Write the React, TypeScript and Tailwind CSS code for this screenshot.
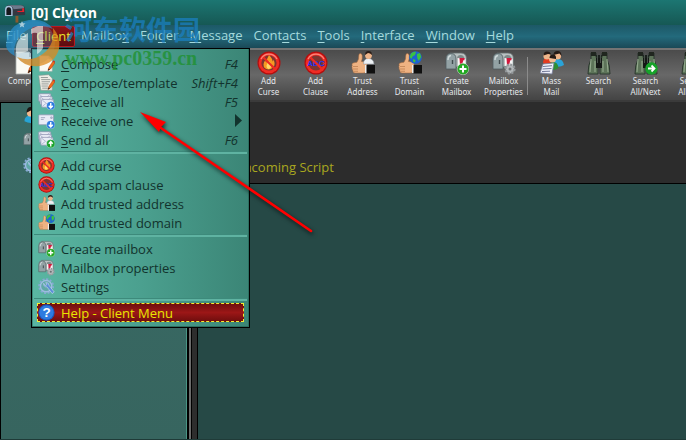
import React from 'react';

type IconName =
  | 'compose'
  | 'template'
  | 'receiveAll'
  | 'receiveOne'
  | 'sendAll'
  | 'curse'
  | 'clause'
  | 'trustAddress'
  | 'trustDomain'
  | 'createMailbox'
  | 'mailboxProps'
  | 'settings'
  | 'help'
  | 'massMail'
  | 'search'
  | 'searchNext'
  | 'person'
  | 'mailbox';

interface MenuEntry {
  icon: IconName;
  label: string;
  hot?: boolean;
  keys?: string;
  sub?: boolean;
  active?: boolean;
}

interface ToolEntry {
  icon: IconName;
  lines: string[];
}

const clientMenu: MenuEntry[][] = [
  [
    { icon: 'compose', label: 'Compose', hot: true, keys: 'F4' },
    { icon: 'template', label: 'Compose/template', hot: true, keys: 'Shift+F4' },
    { icon: 'receiveAll', label: 'Receive all', hot: true, keys: 'F5' },
    { icon: 'receiveOne', label: 'Receive one', sub: true },
    { icon: 'sendAll', label: 'Send all', hot: true, keys: 'F6' },
  ],
  [
    { icon: 'curse', label: 'Add curse' },
    { icon: 'clause', label: 'Add spam clause' },
    { icon: 'trustAddress', label: 'Add trusted address' },
    { icon: 'trustDomain', label: 'Add trusted domain' },
  ],
  [
    { icon: 'createMailbox', label: 'Create mailbox' },
    { icon: 'mailboxProps', label: 'Mailbox properties' },
    { icon: 'settings', label: 'Settings' },
  ],
  [{ icon: 'help', label: 'Help - Client Menu', active: true }],
];

// [before, underlined letter, after]
const menusAfterClient: [string, string, string][] = [
  ['Mailbo', 'x', ''],
  ['Fol', 'd', 'er'],
  ['', 'M', 'essage'],
  ['Cont', 'a', 'cts'],
  ['', 'T', 'ools'],
  ['', 'I', 'nterface'],
  ['', 'W', 'indow'],
  ['', 'H', 'elp'],
];

const rulesTools: ToolEntry[] = [
  { icon: 'curse', lines: ['Add', 'Curse'] },
  { icon: 'clause', lines: ['Add', 'Clause'] },
  { icon: 'trustAddress', lines: ['Trust', 'Address'] },
  { icon: 'trustDomain', lines: ['Trust', 'Domain'] },
  { icon: 'createMailbox', lines: ['Create', 'Mailbox'] },
  { icon: 'mailboxProps', lines: ['Mailbox', 'Properties'] },
];

const searchTools: ToolEntry[] = [
  { icon: 'massMail', lines: ['Mass', 'Mail'] },
  { icon: 'search', lines: ['Search', 'All'] },
  { icon: 'searchNext', lines: ['Search', 'All/Next'] },
  { icon: 'searchNext', lines: ['Search', 'All/Prev'] },
];

const Pencil = () => (
  <g>
    <path d="M14 22l1.500-5 5.500-8 3 2-5.500 8z" fill="#f06a1c" stroke="#a33a0c" strokeWidth=".6" />
    <path d="M21 9l1-1.500 2 1.600-.3 1.600z" fill="#d22" />
    <path d="M14 22l1-3 2 1.400z" fill="#2b2018" />
  </g>
);

const Envelope = ({ x, y }: { x: number; y: number }) => (
  <g transform={`translate(${x} ${y})`}>
    <rect width="17" height="11" rx="1" fill="#e9ecf6" stroke="#8b90ae" />
    <path d="M1 1l7.500 6L16 1M1 10l5-4M16 10l-5-4" fill="none" stroke="#9fa5c4" />
  </g>
);

const Badge = ({ color, d }: { color: string; d: string }) => (
  <g>
    <circle cx="18" cy="18" r="5.800" fill={color} stroke="#ffffff" strokeOpacity=".5" strokeWidth=".8" />
    <path d={d} fill="none" stroke="#fff" strokeWidth="2" />
  </g>
);

const Ban = ({ children }: { children: React.ReactNode }) => (
  <g>
    <circle cx="12" cy="12" r="11.500" fill="#b30f0f" />
    <circle cx="12" cy="12" r="10.300" fill="#f02c24" />
    <circle cx="12" cy="12" r="7.600" fill="#7c3530" />
    {children}
    <path d="M6 6l12 12" stroke="#ee2a22" strokeWidth="2.200" />
    <path d="M4 8a9 9 0 0 1 16 0" fill="none" stroke="#ff9d94" strokeWidth="1.200" opacity=".8" />
  </g>
);

const Thumb = () => (
  <g>
    <path
      d="M1 13.500q0-1.500 2-1.700l3-.6q2.200-3 1.800-6.700 0-2 1.500-2t1.900 2.200q.3 2.800-.8 5.800l5.600.8v9.200q-1 1.500-4 1.500H4q-2 0-2-2 0-1-1-2 .6-1-.2-2.200.8-1 .2-2.300z"
      fill="#eeb282"
      stroke="#a86a3d"
      strokeWidth=".5"
    />
    <path d="M2 15.500h5M2 18h5M3 20.300h4" stroke="#b87a4c" strokeWidth=".7" />
    <rect x="14" y="14" width="2" height="8" fill="#eee" />
    <path d="M15.500 14H24v8.500h-8.500z" fill="#101010" />
  </g>
);

const Globe = () => (
  <g>
    <circle cx="17.500" cy="6.500" r="6.300" fill="#1d62d2" />
    <path d="M13 2.500q3-2.500 5-1.500l-1 3-2.500 1.500-1 2.500-1.800-2zM19 3l3-1 1.200 4-2.500 4-1.500-3zM15 8l2.500 1-.5 2.600-2-1z" fill="#3cc142" />
  </g>
);

const Bust = () => (
  <g>
    <path d="M12.500 13q0-5.500 5-5.500t5.500 5.500z" fill="#eef1f4" stroke="#8b939c" strokeWidth=".5" />
    <circle cx="17.500" cy="4.600" r="3.400" fill="#efb58a" />
    <path d="M14 4q0-4 3.500-4t3.500 4q-2-2-4-2z" fill="#2a1d17" />
  </g>
);

const PostBox = () => (
  <g>
    <path d="M5 2h11q5 0 5.500 5v9H5z" fill="#b9c2c2" stroke="#626c6c" strokeWidth=".8" />
    <path d="M12 17V7.500q0-3.500 3.500-3.500T19.500 8v9z" fill="#7f8989" />
    <path d="M12.500 7l8 1v6l-8 1z" fill="#f6f6f6" />
    <path d="M14.500 7h5v2.200h-1.200l-1.300 5h-2z" fill="#d3183c" />
    <path d="M1 18V8q0-5.500 5-5.500t5 5.500v10z" fill="#93a2a5" stroke="#4f5c60" strokeWidth=".8" />
    <path d="M3 9q0-4 3-4.500" fill="none" stroke="#d0dadb" strokeWidth="1.400" />
    <path d="M7.500 9v4" stroke="#414c50" strokeWidth="1.400" />
  </g>
);

const Binoculars = () => (
  <g>
    <rect x="8" y="4" width="8" height="9" fill="#1b201d" />
    <path d="M4 2h5v4l2 4v13H1q0-9 3-15z" fill="#5d7459" stroke="#27332a" strokeWidth=".9" />
    <path d="M20 2h-5v4l-2 4v13h10q0-9-3-15z" fill="#5d7459" stroke="#27332a" strokeWidth=".9" />
    <path d="M9 7h6v10H9z" fill="#151816" />
    <path d="M4 1h5v4H4zM15 1h5v4h-5z" fill="#20261f" />
    <path d="M4 8L3 21M20 8l1 13M8 10v11M16 10v11" stroke="#93a98d" strokeWidth="1.100" />
    <path d="M10.500 4v8M13.500 4v8" stroke="#555f58" strokeWidth=".8" />
  </g>
);

const Icon = ({ name, className }: { name: IconName; className: string }) => (
  <svg viewBox="0 0 24 24" className={className} aria-hidden="true">
    {name === 'compose' && (
      <>
        <path d="M2 1h13l5 5v17H2z" fill="#fbfaf4" stroke="#aab0ae" strokeWidth=".8" />
        <path d="M15 1v5h5z" fill="#c9ccca" />
        <Pencil />
      </>
    )}
    {name === 'template' && (
      <>
        <path d="M1 2l14-1 5 5v17H4z" fill="#f0eee6" stroke="#8e9391" strokeWidth=".8" />
        <path d="M4 5h10M4.500 8h13M5 11h12M5 14h10M5 17h9M6 20h8" stroke="#7d8483" strokeWidth="1.100" />
        <Pencil />
      </>
    )}
    {name === 'receiveAll' && (
      <>
        <Envelope x={1} y={1} />
        <Envelope x={3} y={5} />
        <Envelope x={5} y={9} />
        <Badge color="#2d7be0" d="M18 14.200v6.600M15.200 18l2.800 3 2.800-3" />
      </>
    )}
    {name === 'receiveOne' && (
      <>
        <rect x="1" y="4" width="21" height="14" rx="1" fill="#e9ecf6" stroke="#8b90ae" />
        <path d="M4 8h6M4 10.500h4M18 7h2v2h-2z" fill="none" stroke="#8b90ae" />
        <Badge color="#2d7be0" d="M18 14.200v6.600M15.200 18l2.800 3 2.800-3" />
      </>
    )}
    {name === 'sendAll' && (
      <>
        <Envelope x={1} y={1} />
        <Envelope x={2} y={5} />
        <Envelope x={4} y={9} />
        <Badge color="#18a32a" d="M18 21.800v-6.600M15.200 18l2.800-3 2.800 3" />
      </>
    )}
    {name === 'curse' && (
      <Ban>
        <path d="M12 4q4 4 3.500 6.500 1-.5 1-2 2.500 5.500-.5 8-2 2-4.500 2-5-.5-5-5 0-2.500 2-4.500 0 2 1 2.500Q9.500 8 12 4z" fill="#f79a22" />
        <path d="M12 10q3 3 2 6-1 2-2.500 2-2-.500-2-3 .2-2 2.500-5z" fill="#ffd968" />
      </Ban>
    )}
    {name === 'clause' && (
      <Ban>
        <text x="12" y="15" textAnchor="middle" fontSize="8" fontWeight="700" fontFamily="Liberation Sans, sans-serif" fill="#2433f0">
          ABC
        </text>
      </Ban>
    )}
    {name === 'trustAddress' && (
      <>
        <Thumb />
        <Bust />
      </>
    )}
    {name === 'trustDomain' && (
      <>
        <Thumb />
        <Globe />
      </>
    )}
    {name === 'createMailbox' && (
      <>
        <PostBox />
        <Badge color="#23a823" d="M18 14.500v7M14.500 18h7" />
      </>
    )}
    {name === 'mailboxProps' && (
      <>
        <PostBox />
        <circle cx="18" cy="18" r="4.400" fill="#b4b8ba" stroke="#94999c" strokeWidth="2.400" strokeDasharray="2 1.400" />
        <circle cx="18" cy="18" r="1.500" fill="#6c7073" />
      </>
    )}
    {name === 'settings' && (
      <>
        <circle cx="11.500" cy="11.500" r="10" fill="none" stroke="#86a9d4" strokeWidth="2.400" strokeDasharray="3 2.200" />
        <circle cx="11.500" cy="11.500" r="8" fill="#5fa8a6" stroke="#9dbce0" strokeWidth="2" />
        <path d="M8 7.500a4 4 0 0 0 4.500 5L20 22l3-2.200-7.500-9.500A4 4 0 0 0 11 6.500l1.500 2.800-2 1.500z" fill="#5d8fd8" stroke="#d3e1f5" strokeWidth=".8" />
      </>
    )}
    {name === 'help' && (
      <>
        <circle cx="12" cy="12" r="11.500" fill="#1b57b8" />
        <circle cx="12" cy="12" r="10" fill="#2e7be0" />
        <text x="12" y="18.500" textAnchor="middle" fontSize="19" fontWeight="700" fontFamily="Liberation Sans, sans-serif" fill="#fff">
          ?
        </text>
      </>
    )}
    {name === 'massMail' && (
      <>
        <path d="M13 15q0-7 5-7t6 6q-4 3-11 1z" fill="#2aa3d8" />
        <circle cx="17.500" cy="5" r="3.600" fill="#efb58a" />
        <path d="M13.500 4q0-4 4-4t4 5l-2-2.500z" fill="#251a16" />
        <path d="M9 19q-1-8 4-8t5.500 6q-4 3-9.500 2z" fill="#2b8f34" />
        <path d="M3 12q0-5 4-5t4 4l-3 4z" fill="#e33b20" />
        <circle cx="7" cy="5" r="3.600" fill="#efb58a" />
        <circle cx="12.500" cy="8" r="3.500" fill="#f2bd94" />
        <path d="M3.500 4.500q0-4 3.500-4t4 3l-3-.5zM9.500 7q0-3.500 3.500-3.500T16 8z" fill="#251a16" />
        <path d="M3 13l11-1-2 11-12-1z" fill="#eff1fa" stroke="#767d9c" strokeWidth=".8" />
        <path d="M3 15.500l9-.8M2.500 18l9-.5M2 20.500l8-.3" stroke="#6e7696" />
      </>
    )}
    {name === 'search' && <Binoculars />}
    {name === 'searchNext' && (
      <>
        <Binoculars />
        <circle cx="17.500" cy="17.500" r="6.200" fill="#16a329" />
        <path d="M14 17.500h6.500M17.500 14.500l3 3-3 3" fill="none" stroke="#fff" strokeWidth="1.800" />
      </>
    )}
    {name === 'person' && (
      <>
        <path d="M2 20q0-8 9-8t9 8q-9 5-18 0z" fill="#27a3d4" />
        <circle cx="11" cy="8" r="5.500" fill="#f0b78c" />
        <path d="M5 8q0-8 6-8t6 8l-4-4z" fill="#1c1613" />
      </>
    )}
    {name === 'mailbox' && <PostBox />}
  </svg>
);

const ToolButton = ({ tool }: { tool: ToolEntry }) => (
  <button className="flex w-[47px] shrink-0 flex-col items-center font-['Noto_Sans',sans-serif] text-[8px] leading-[11px] text-gray-200">
    <Icon name={tool.icon} className="h-6 w-6" />
    {tool.lines.map((line) => (
      <span key={line}>{line}</span>
    ))}
  </button>
);

const ClientMenu = () => (
  <div
    role="menu"
    className="absolute top-full -left-px z-10 w-[219px] border border-black bg-linear-to-r from-[#5ab6a2] via-[#4ba08f] to-[#3b8576] p-[5px] text-[#12332d] shadow-[inset_-1px_-1px_0_#2c6e60,inset_1px_1px_0_#3c8a7a]"
  >
    {clientMenu.map((group, i) => (
      <div key={i}>
        {i > 0 && <div className="-mx-[3px] my-[2px] h-[3px] border-t border-b-2 border-t-[#3d8a7b] border-b-[#5fb3a2]" />}
        {group.map((item) => (
          <button
            key={item.label}
            role="menuitem"
            className={`flex h-[19px] w-full items-center gap-1.5 pr-1.5 text-left ${
              item.active
                ? 'bg-linear-to-b from-[#6c0d0d] via-[#9c1717] to-[#6c0d0d] text-[#e8e600] outline-1 -outline-offset-1 outline-dashed outline-[#f4ee30]'
                : ''
            }`}
          >
            <Icon name={item.icon} className="ml-px h-[17px] w-[17px] shrink-0" />
            <span className="flex-1 pt-0.5 whitespace-nowrap">
              {item.hot ? (
                <>
                  <u className="underline-offset-2">{item.label[0]}</u>
                  {item.label.slice(1)}
                </>
              ) : (
                item.label
              )}
            </span>
            {item.keys && <span className="pt-0.5 italic">{item.keys}</span>}
            {item.sub && (
              <svg viewBox="0 0 7 13" className="-mr-1 h-[13px] w-[7px]" aria-hidden="true">
                <path d="M0 0l7 6.500L0 13z" fill="#12332d" />
              </svg>
            )}
          </button>
        ))}
      </div>
    ))}
  </div>
);

const Watermark = () => (
  <div className="pointer-events-none absolute top-4 left-[5px] z-20 flex gap-1" aria-hidden="true">
    <svg viewBox="0 0 56 52" className="h-[52px] w-14" aria-hidden="true">
      <circle cx="28" cy="27" r="22" fill="#5f9fc4" opacity=".3" />
      <path d="M1 30Q2 8 24 4q16-2 24 9-13-6-24 0Q10 20 9 35q0 3 1 5-8-4-9-10z" fill="#2a8dc8" opacity=".75" />
      <path d="M48 12q8 9 6 21-4 14-19 17-15 2-23-9 15 6 27-4 11-9 9-25z" fill="#de8a1e" opacity=".75" />
      <path d="M11 31q1-7 6-10l6-4v18q-6 3-12 2zM26 13l7-3h5v22q-3 5-6 6V17q-3-1-6 1z" fill="#f4f6f2" opacity=".6" />
      <path d="M17 5l1 2.300 2.500.2-2 1.600.7 2.400-2.200-1.300-2.200 1.300.7-2.400-2-1.600 2.500-.2z" fill="#dfe9ea" opacity=".7" />
    </svg>
    <div className="flex flex-col">
      <span className="font-['Noto_Sans_CJK_SC',sans-serif] text-[27px] leading-[26px] font-bold whitespace-nowrap text-[#1a7fc0]/75">
        河东软件园
      </span>
      <span className="mt-1.5 font-['Liberation_Serif',serif] text-[20px] leading-5 font-bold text-[#1f9130]/80">
        www.pc0359.cn
      </span>
    </div>
  </div>
);

const Arrow = () => (
  <svg
    viewBox="0 0 190 136"
    className="pointer-events-none absolute top-[106px] left-[134px] z-30 h-[136px] w-[190px] drop-shadow-[1px_2px_2px_rgba(0,0,0,0.7)]"
    aria-hidden="true"
  >
    <path d="M24 20L177 125" stroke="#ff0000" strokeWidth="2.600" strokeLinecap="round" />
    <path d="M6 6l26 10-5 5-2 5z" fill="#ff0000" />
  </svg>
);

export default function App() {
  return (
    <div className="relative flex min-h-screen flex-col overflow-hidden bg-black font-['Open_Sans',sans-serif] text-[13px] leading-[19px]">
      <header className="flex h-[25px] items-center gap-1 bg-linear-to-b from-[#1c7672] to-[#165854] pl-1 text-white">
        <svg viewBox="0 0 24 20" className="h-5 w-[23px]" aria-hidden="true">
          <path d="M4 2h14q4 0 4 5v5L2 13V7q0-4 2-5z" fill="#343842" />
          <path d="M5 2h12q4 0 4 3L10 6q-1-3-5-4z" fill="#6d7a8c" />
          <path d="M1 13V7q0-4.500 4-4.500T9 7v6z" fill="#a9c3dc" />
          <path d="M2.500 12V7.500Q2.500 4 5 4t2.500 3.500V12z" fill="#17181c" />
          <path d="M14 8h5V5h2v4h-7z" fill="#e5212b" />
          <path d="M12 13h3v7h-3z" fill="#8a5a30" />
        </svg>
        <h1 className="text-sm leading-[19px] font-bold">[0] Clyton</h1>
      </header>

      <nav className="flex h-[23px] items-center bg-linear-to-b from-[#1d5866] via-[#236a7c] to-[#1a4957] text-[#a5dadd]">
        <button className="w-8 pb-0.5 pl-1.5 text-left">
          <u className="underline-offset-2">F</u>ile
        </button>
        <div className="relative h-full w-[43px]">
          <button className="mt-px h-[21px] w-full rounded-xs border border-[#b81820] bg-linear-to-b from-[#8c1414] to-[#5c0c10] text-center leading-[19px] text-[#e6e62a]">
            <u className="underline-offset-2">C</u>lient
          </button>
          <ClientMenu />
        </div>
        {menusAfterClient.map(([before, key, after]) => (
          <button key={before + key} className="pr-[5px] pb-0.5 pl-1.5 whitespace-nowrap">
            {before}
            <u className="underline-offset-2">{key}</u>
            {after}
          </button>
        ))}
      </nav>

      <div className="flex h-[54px] items-start overflow-hidden border-t-2 border-b-2 border-t-[#747474] border-b-[#3b3b3b] bg-linear-to-b from-[#4b4b4b] via-[#686868] to-[#444444] pt-px pl-0.5">
        <ToolButton tool={{ icon: 'compose', lines: ['Compose'] }} />
        <div className="w-[196px] shrink-0" />
        {rulesTools.map((tool) => (
          <ToolButton key={tool.lines.join(' ')} tool={tool} />
        ))}
        <div className="mt-1.5 h-[38px] w-px shrink-0 bg-[#8b8b8b]" />
        {searchTools.map((tool) => (
          <ToolButton key={tool.lines.join(' ')} tool={tool} />
        ))}
      </div>

      <main className="flex flex-1 border-b border-[#1f3b38]">
        <aside className="mt-px ml-px flex w-[186px] shrink-0 flex-col gap-2 border-r border-[#4a9585] bg-linear-to-b from-[#396b66] to-[#37655f] pt-1 pl-5.5">
          <Icon name="person" className="h-[17px] w-[17px]" />
          <Icon name="mailbox" className="h-[17px] w-[17px]" />
          <Icon name="settings" className="h-[17px] w-[17px]" />
        </aside>
        <div className="ml-0.5 w-0.5 shrink-0 bg-[#6b6b6b]" />
        <div className="ml-px w-[5px] shrink-0 bg-[#2d2d2d]" />
        <section className="ml-px flex flex-1 flex-col">
          <div className="flex h-[81px] items-end bg-[#2c2c2c] pb-1.5 pl-[42px] text-[#a9a71f]">Incoming Script</div>
          <div className="mt-px flex-1 bg-[#264946]" />
        </section>
      </main>

      <Watermark />
      <Arrow />
    </div>
  );
}
